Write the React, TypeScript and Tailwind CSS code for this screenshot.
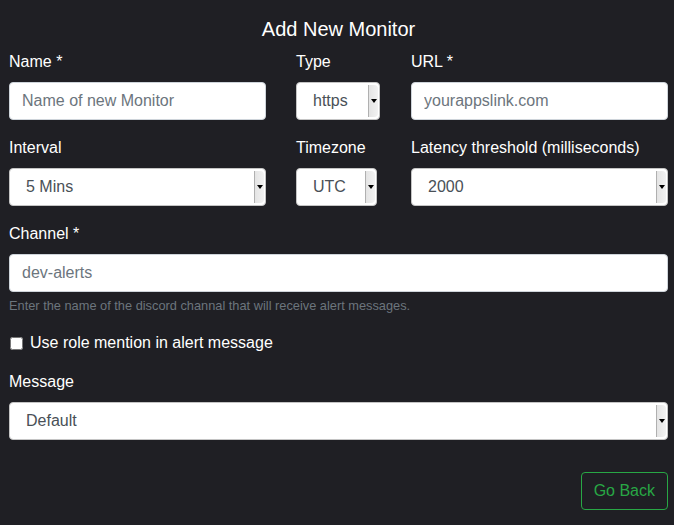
import React from 'react';

const font = { fontFamily: '"Liberation Sans", Arial, sans-serif' };

const Label: React.FC<{ children: React.ReactNode }> = ({ children }) => (
  <label className="block text-[16px] leading-[24px] text-white mb-2">{children}</label>
);

const TextInput: React.FC<{ placeholder: string }> = ({ placeholder }) => (
  <input
    type="text"
    placeholder={placeholder}
    className="block w-full h-[38px] px-3 bg-white border border-[#ced4da] rounded text-[16px] text-[#495057] placeholder:text-[#6c757d] outline-none"
  />
);

const FakeSelect: React.FC<{ value: string; className?: string }> = ({ value, className = '' }) => (
  <div className={`flex h-[38px] bg-white border border-[#c4c4c4] rounded overflow-hidden ${className}`}>
    <div className="flex-1 flex items-center pl-4 text-[16px] text-[#495057] whitespace-nowrap">{value}</div>
    <div className="w-[10px] my-[2px] mr-[1px] flex items-center justify-center bg-gradient-to-r from-[#e4e4e4] to-[#f2f2f2] border-l border-[#b0b0b0] rounded-r-sm">
      <div className="w-0 h-0 border-l-[3px] border-r-[3px] border-t-[4px] border-l-transparent border-r-transparent border-t-black" />
    </div>
  </div>
);

export default function App() {
  return (
    <div className="min-h-[525px] w-full bg-[#1f1f24] pl-[9px] pr-[6px] pt-[17px]" style={font}>
      <h4 className="text-center text-white text-[20px] leading-[24px] mb-[9px]">Add New Monitor</h4>

      <div className="flex">
        <div className="w-[257px]">
          <Label>Name *</Label>
          <TextInput placeholder="Name of new Monitor" />
        </div>
        <div className="w-[85px] ml-[30px]">
          <Label>Type</Label>
          <FakeSelect value="https" className="w-[84px]" />
        </div>
        <div className="flex-1 ml-[30px]">
          <Label>URL *</Label>
          <TextInput placeholder="yourappslink.com" />
        </div>
      </div>

      <div className="flex mt-4">
        <div className="w-[257px]">
          <Label>Interval</Label>
          <FakeSelect value="5 Mins" />
        </div>
        <div className="w-[85px] ml-[30px]">
          <Label>Timezone</Label>
          <FakeSelect value="UTC" className="w-[81px]" />
        </div>
        <div className="flex-1 ml-[30px]">
          <Label>Latency threshold (milliseconds)</Label>
          <FakeSelect value="2000" />
        </div>
      </div>

      <div className="mt-4">
        <Label>Channel *</Label>
        <input
          type="text"
          placeholder="dev-alerts"
          className="block w-full h-[38px] px-3 bg-white border border-[#ced4da] rounded text-[16px] text-[#495057] placeholder:text-[#6c757d] outline-none"
        />
        <p className="mt-1 text-[12.8px] leading-[19px] text-[#6c757d]">
          Enter the name of the discord channal that will receive alert messages.
        </p>
      </div>

      <div className="flex items-center mt-[16px] h-[24px]">
        <input type="checkbox" className="w-[13px] h-[13px] ml-[1px] mr-[7px]" />
        <span className="text-[16px] text-white">Use role mention in alert message</span>
      </div>

      <div className="mt-[15px]">
        <Label>Message</Label>
        <FakeSelect value="Default" />
      </div>

      <div className="flex justify-end mt-[32px]">
        <button className="h-[38px] px-3 border border-[#28a745] rounded text-[16px] text-[#28a745]">Go Back</button>
      </div>
    </div>
  );
}
